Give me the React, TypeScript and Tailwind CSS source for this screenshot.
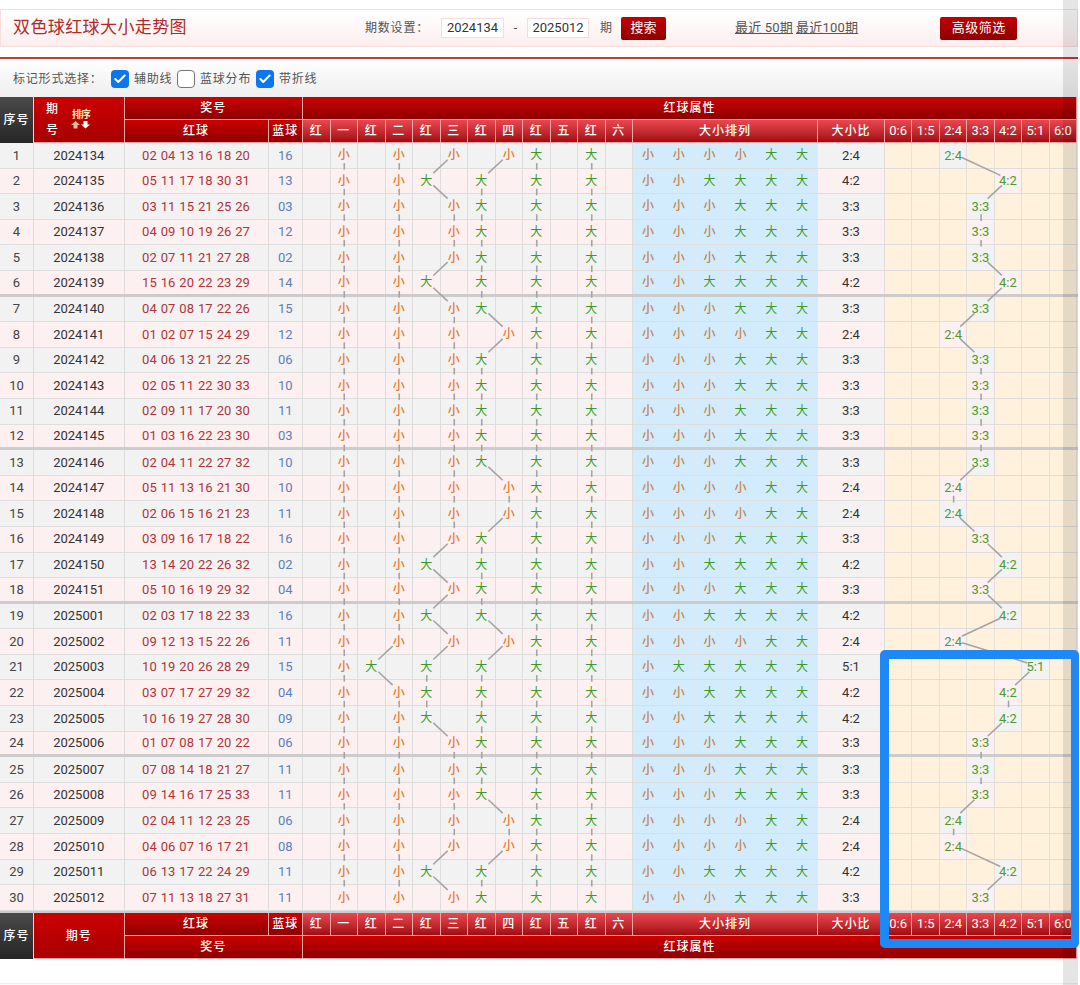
import { Check } from "lucide-react";

const RAW = [
  "2024134 02 04 13 16 18 20 16",
  "2024135 05 11 17 18 30 31 13",
  "2024136 03 11 15 21 25 26 03",
  "2024137 04 09 10 19 26 27 12",
  "2024138 02 07 11 21 27 28 02",
  "2024139 15 16 20 22 23 29 14",
  "2024140 04 07 08 17 22 26 15",
  "2024141 01 02 07 15 24 29 12",
  "2024142 04 06 13 21 22 25 06",
  "2024143 02 05 11 22 30 33 10",
  "2024144 02 09 11 17 20 30 11",
  "2024145 01 03 16 22 23 30 03",
  "2024146 02 04 11 22 27 32 10",
  "2024147 05 11 13 16 21 30 10",
  "2024148 02 06 15 16 21 23 11",
  "2024149 03 09 16 17 18 22 16",
  "2024150 13 14 20 22 26 32 02",
  "2024151 05 10 16 19 29 32 04",
  "2025001 02 03 17 18 22 33 16",
  "2025002 09 12 13 15 22 26 11",
  "2025003 10 19 20 26 28 29 15",
  "2025004 03 07 17 27 29 32 04",
  "2025005 10 16 19 27 28 30 09",
  "2025006 01 07 08 17 20 22 06",
  "2025007 07 08 14 18 21 27 11",
  "2025008 09 14 16 17 25 33 11",
  "2025009 02 04 11 12 23 25 06",
  "2025010 04 06 07 16 17 21 08",
  "2025011 06 13 17 22 24 29 11",
  "2025012 07 11 13 18 27 31 11",
];

const rows = RAW.map((line, i) => {
  const parts = line.split(" ");
  const reds = parts.slice(1, 7);
  const big = reds.map((n) => Number(n) > 16);
  return { no: i + 1, issue: parts[0], reds, blue: parts[7], big, bigCount: big.filter(Boolean).length };
});

const RATIOS = ["0:6", "1:5", "2:4", "3:3", "4:2", "5:1", "6:0"];
const BALL_HEADS = ["红", "一", "红", "二", "红", "三", "红", "四", "红", "五", "红", "六"];

const COLS =
  "grid grid-cols-[34px_90.5px_144px_34.5px_repeat(12,27.5px)_repeat(6,30.83px)_67px_repeat(7,27.45px)]";

const ROW_H = 25.6;
const rowY = (i: number) => i * ROW_H + 10.6;
const ballX = (col: number) => 303 + (col + 0.5) * 27.5;
const ratioX = (idx: number) => 885 + (idx + 0.5) * 27.45;

function segment(x1: number, y1: number, x2: number, y2: number, key: string) {
  const len = Math.hypot(x2 - x1, y2 - y1);
  // straight dashes stay short so they don't run into the glyph below
  const cut = x1 === x2 ? 9.5 : 9;
  const ux = (x2 - x1) / len;
  const uy = (y2 - y1) / len;
  return (
    <line
      key={key}
      x1={x1 + ux * cut}
      y1={y1 + uy * cut}
      x2={x2 - ux * cut}
      y2={y2 - uy * cut}
      stroke="#a4a4a4"
      strokeWidth="1.6"
    />
  );
}

function TrendLines() {
  const lines = [];
  for (let i = 0; i < rows.length - 1; i++) {
    for (let b = 0; b < 6; b++) {
      const a = b * 2 + (rows[i].big[b] ? 0 : 1);
      const c = b * 2 + (rows[i + 1].big[b] ? 0 : 1);
      lines.push(segment(ballX(a), rowY(i), ballX(c), rowY(i + 1), `b${i}-${b}`));
    }
    lines.push(segment(ratioX(rows[i].bigCount), rowY(i), ratioX(rows[i + 1].bigCount), rowY(i + 1), `r${i}`));
  }
  return (
    <svg className="absolute left-0 top-0 pointer-events-none" width="1078" height="768">
      {lines}
    </svg>
  );
}

function Mark({ big }: { big: boolean }) {
  return big ? <span className="text-[#3f9a1f]">大</span> : <span className="text-[#e67a30] font-medium">小</span>;
}

function Box({ on }: { on: boolean }) {
  return on ? (
    <span className="w-[18px] h-[18px] rounded-[4px] bg-[#0b76ee] flex items-center justify-center">
      <Check size={14} strokeWidth={3.5} className="text-white" />
    </span>
  ) : (
    <span className="w-[18px] h-[18px] rounded-[4px] bg-white border border-[#767676]" />
  );
}

const thBase = "flex items-center justify-center text-white border-r border-b border-[#f0a6a6] tracking-[1px] font-medium";
const thDark = "bg-linear-to-b from-[#cc0000] to-[#8e0000]";
const thLight = "bg-linear-to-b from-[#ea4750] to-[#a20a0f]";

function SubHeads() {
  return (
    <>
      {BALL_HEADS.map((t, i) => (
        <div key={i} className={`${thBase} ${thLight}`}>
          {t}
        </div>
      ))}
      <div className={`${thBase} ${thLight} col-span-6`}>大小排列</div>
      <div className={`${thBase} ${thLight}`}>大小比</div>
      {RATIOS.map((t) => (
        <div key={t} className={`${thBase} ${thLight} tracking-normal font-normal text-[13px]`}>
          {t}
        </div>
      ))}
    </>
  );
}

function SortArrows() {
  return (
    <div className="flex flex-col items-center leading-none ml-[3px]">
      <span className="text-[10px] font-bold text-[#ffe9b8] tracking-[-1px] mb-[1px]">排序</span>
      <svg width="20" height="8" viewBox="0 0 20 8">
        <polygon points="4.5,0 9,4 6.5,4 6.5,7.5 2.5,7.5 2.5,4 0,4" fill="#e8b8a0" />
        <polygon points="14.5,7.5 19,3.5 16.5,3.5 16.5,0 12.5,0 12.5,3.5 10,3.5" fill="#ffffff" />
      </svg>
    </div>
  );
}

export default function App() {
  return (
    <div className="relative w-[1080px] h-[985px] overflow-hidden bg-white text-[12px] text-[#444] font-[Roboto,'Noto_Sans_CJK_SC',sans-serif]">
      <div className="pt-[9px] w-[1078px]">
        {/* top bar */}
        <div className="h-[38px] flex items-center border border-[#f9dede] bg-linear-to-b from-white to-[#fdeeee]">
          <h1 className="ml-[12px] w-[352px] text-[17px] tracking-[0.4px] text-[#b12a2a] font-normal">双色球红球大小走势图</h1>
          <span className="tracking-[0.8px] w-[76px] text-[#555]">期数设置：</span>
          <span className="w-[63px] h-[20px] bg-white border border-[#f6dcdc] flex items-center justify-center text-[13px] text-[#333]">2024134</span>
          <span className="w-[23px] text-center">-</span>
          <span className="w-[62px] h-[20px] bg-white border border-[#f6dcdc] flex items-center justify-center text-[13px] text-[#333]">2025012</span>
          <span className="ml-[11px] w-[21px] text-[#555]">期</span>
          <button className="w-[45px] h-[23px] rounded-[2px] bg-linear-to-b from-[#c40000] to-[#8e0000] text-white text-[13px]">搜索</button>
          <a className="ml-[69px] underline text-[#555] text-[13px] tracking-[0.2px]">最近 50期</a>
          <a className="ml-[3px] underline text-[#555] text-[13px] tracking-[0.2px]">最近100期</a>
          <button className="ml-[82px] w-[77px] h-[23px] rounded-[2px] bg-linear-to-b from-[#c40000] to-[#8e0000] text-white text-[13px] tracking-[0.5px]">高级筛选</button>
        </div>

        {/* options */}
        <div className="mt-[10px] border-t-2 border-[#c43a3a] h-[40px] pt-[2px] flex items-center pl-[13px] bg-linear-to-b from-white to-[#eeeeee] text-[#555] tracking-[0.8px]">
          <span className="w-[98px]">标记形式选择：</span>
          <Box on />
          <span className="ml-[5px] w-[43px]">辅助线</span>
          <Box on={false} />
          <span className="ml-[5px] w-[56px]">蓝球分布</span>
          <Box on />
          <span className="ml-[5px]">带折线</span>
        </div>

        {/* head */}
        <div className={`${COLS} grid-rows-[23px_23px] text-[12px]`}>
          <div className="row-span-2 flex items-center justify-center text-white border-r border-[#ddd] bg-linear-to-b from-[#4a4a4a] to-[#262626] tracking-[1px] font-medium">序号</div>
          <div className={`${thBase} row-span-2 bg-linear-to-b from-[#cc0000] to-[#a80000] justify-start pl-[12px]`}>
            <span className="w-[12px] leading-[21px] tracking-normal">期号</span>
            <span className="ml-[10px]">
              <SortArrows />
            </span>
          </div>
          <div className={`${thBase} ${thDark} col-span-2`}>奖号</div>
          <div className={`${thBase} ${thDark} col-span-[26]`}>红球属性</div>
          <div className={`${thBase} ${thDark}`}>红球</div>
          <div className={`${thBase} ${thDark} tracking-[0.5px]`}>蓝球</div>
          <SubHeads />
        </div>

        {/* body */}
        <div className="relative">
          {rows.map((r) => {
            const rowBg = r.no % 2 === 1 ? "bg-[#f2f2f2]" : "bg-[#fdf0f0]";
            const line = r.no % 6 === 0 && r.no < 30 ? "border-b-[3px] border-[#cccccc]" : "border-b border-[#dddddd]";
            return (
              <div key={r.no} className={`${COLS} h-[25.6px] ${rowBg} ${line}`}>
                <div className="flex items-center justify-center border-r border-[#dddddd] text-[13px] text-[#444]">{r.no}</div>
                <div className="flex items-center justify-center border-r border-[#dddddd] text-[13px] text-[#333]">{r.issue}</div>
                <div className="flex items-center justify-center border-r border-[#dddddd] text-[13px] text-[#b0343a] [word-spacing:0.8px]">{r.reds.join(" ")}</div>
                <div className="flex items-center justify-center border-r border-[#dddddd] text-[13px] text-[#5b80bd]">{r.blue}</div>
                {BALL_HEADS.map((_, c) => {
                  const b = Math.floor(c / 2);
                  const hit = (c % 2 === 0) === r.big[b];
                  return (
                    <div key={c} className="flex items-center justify-center border-r border-[#dddddd] text-[12px]">
                      {hit && <Mark big={r.big[b]} />}
                    </div>
                  );
                })}
                {r.big.map((v, c) => (
                  <div key={c} className="flex items-center justify-center border-r border-[#dce9f2] bg-[#d2ecfd] text-[12px]">
                    {v ? <span className="text-[#3f9a1f]">大</span> : <span className="text-[#c4854f] font-medium">小</span>}
                  </div>
                ))}
                <div className="flex items-center justify-center border-r border-[#dddddd] text-[13px] text-[#333]">{RATIOS[r.bigCount]}</div>
                {RATIOS.map((t, idx) =>
                  idx === r.bigCount ? (
                    <div key={t} className="flex items-center justify-center border-r border-[#dddddd] text-[13px] text-[#4f9a2c]">{t}</div>
                  ) : (
                    <div key={t} className="border-r border-[#e8e2d6] bg-[#fff1dc]" />
                  ),
                )}
              </div>
            );
          })}
          <TrendLines />
        </div>

        {/* foot */}
        <div className={`${COLS} grid-rows-[23px_23.5px] border-t-2 border-[#cccccc] text-[12px]`}>
          <div className="row-span-2 flex items-center justify-center text-white border-r border-[#ddd] bg-linear-to-b from-[#4a4a4a] to-[#262626] tracking-[1px] font-medium">序号</div>
          <div className={`${thBase} row-span-2 bg-linear-to-b from-[#cc0000] to-[#a80000]`}>期号</div>
          <div className={`${thBase} ${thDark}`}>红球</div>
          <div className={`${thBase} ${thDark} tracking-[0.5px]`}>蓝球</div>
          <SubHeads />
          <div className={`${thBase} ${thDark} col-span-2`}>奖号</div>
          <div className={`${thBase} ${thDark} col-span-[26]`}>红球属性</div>
        </div>

        <div className="mt-[24px] h-[4px] border-t border-[#eeeeee] bg-[#fafafa]" />
      </div>

      {/* scrollbar overlay */}
      <div className="absolute left-[1063px] top-0 w-[15px] h-full bg-black/10" />
      {/* hand drawn highlight */}
      <div className="absolute left-[880px] top-[650px] w-[199px] h-[298px] border-[9px] border-r-[8px] border-[#1e88f5] rounded-[5px]" />
    </div>
  );
}
